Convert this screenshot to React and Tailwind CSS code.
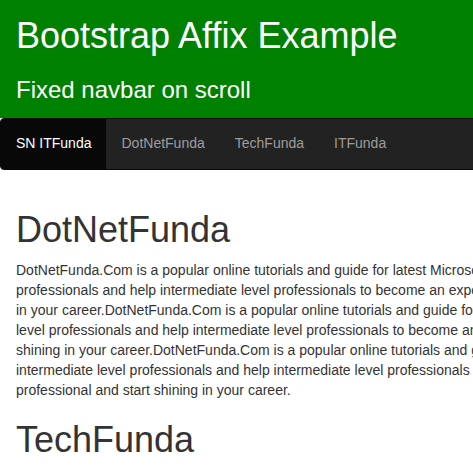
import React from 'react';

const lines = [
  'DotNetFunda.Com is a popular online tutorials and guide for latest Microsoft technologies for beginners and',
  'professionals and help intermediate level professionals to become an expert professional and start shining',
  'in your career.DotNetFunda.Com is a popular online tutorials and guide for latest Microsoft technologies for entry',
  'level professionals and help intermediate level professionals to become an expert professional and start',
  'shining in your career.DotNetFunda.Com is a popular online tutorials and guide for beginners and',
  'intermediate level professionals and help intermediate level professionals to become an expert',
  'professional and start shining in your career.',
];

function App() {
  const items = ['SN ITFunda', 'DotNetFunda', 'TechFunda', 'ITFunda'];

  return (
    <div className="w-full overflow-hidden bg-white font-['Liberation_Sans',Arial,sans-serif] text-[#333]">
      <div className="w-[900px]">
        <div className="bg-[#008000] pl-4 pt-4 pb-[15px] text-white">
          <h1 className="text-[36px] leading-[1.1]">Bootstrap Affix Example</h1>
          <h3 className="mt-[21px] text-[24px] leading-[1.1]">Fixed navbar on scroll</h3>
        </div>

        <nav className="flex h-[52px] rounded-[4px] border border-[#080808] bg-[#222]">
          {items.map((item, i) => (
            <a
              key={item}
              className={
                i === 0
                  ? 'flex items-center rounded-l-[4px] bg-[#080808] px-[15px] text-[14px] text-white'
                  : 'flex items-center px-[15px] text-[14px] text-[#9d9d9d]'
              }
            >
              {item}
            </a>
          ))}
        </nav>

        <div className="px-4 pt-[40px]">
          <h1 className="mb-[10px] text-[36px] leading-[1.1]">DotNetFunda</h1>
          <p className="mb-[10px] whitespace-nowrap text-[14px] leading-[20px]">
            {lines.map((line, i) => (
              <React.Fragment key={i}>
                {line}
                {i < lines.length - 1 && <br />}
              </React.Fragment>
            ))}
          </p>
          <h1 className="mt-[20px] mb-[10px] text-[36px] leading-[1.1]">TechFunda</h1>
          <p className="whitespace-nowrap text-[14px] leading-[20px]">
            {lines[0]}
            <br />
            {lines[1]}
          </p>
        </div>
      </div>
    </div>
  );
}

export default App;
